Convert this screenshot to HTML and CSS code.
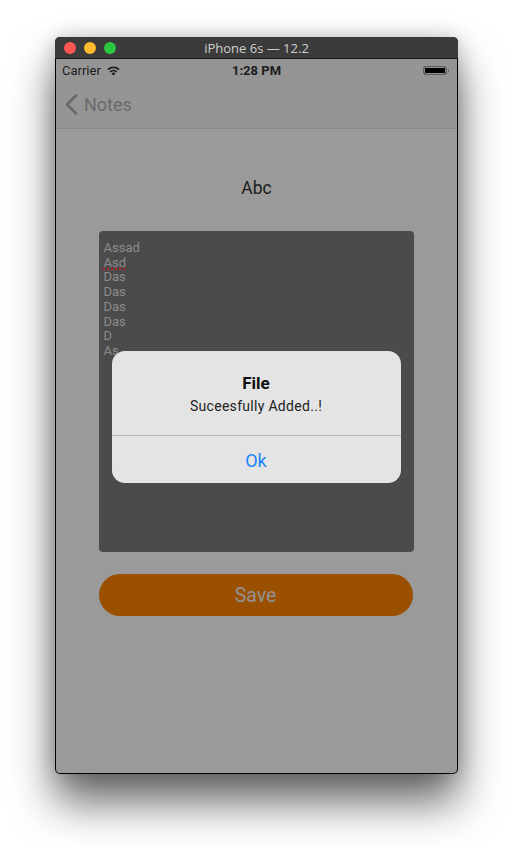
FILE: index.html
```html
<!DOCTYPE html>
<html>
<head>
<meta charset="utf-8">
<link rel="stylesheet" href="styles.css">
</head>
<body>
<div class="page">
  <div class="window">
    <div class="titlebar">
      <div class="lights">
        <span class="light red"></span>
        <span class="light yellow"></span>
        <span class="light green"></span>
      </div>
      <div class="title">iPhone 6s — 12.2</div>
    </div>
    <div class="screen">
      <div class="statusbar">
        <div class="carrier">Carrier
          <svg class="wifi" width="15" height="11" viewBox="0 0 15 11">
            <path d="M7.5 10.5 L5.6 8.4 A2.8 2.8 0 0 1 9.4 8.4 Z" fill="#1c1c1c"/>
            <path d="M3.6 6.3 A5.6 5.6 0 0 1 11.4 6.3 L10.2 7.5 A4 4 0 0 0 4.8 7.5 Z" fill="#1c1c1c"/>
            <path d="M1.4 4 A8.8 8.8 0 0 1 13.6 4 L12.4 5.2 A7.1 7.1 0 0 0 2.6 5.2 Z" fill="#1c1c1c"/>
          </svg>
        </div>
        <div class="time">1:28 PM</div>
        <div class="battery"><span class="cell"></span><span class="nub"></span></div>
      </div>
      <div class="navbar">
        <svg class="chev" width="13" height="21" viewBox="0 0 13 21"><path d="M11 1.5 L2 10.5 L11 19.5" fill="none" stroke="#6a6a6a" stroke-width="2.6" stroke-linecap="round" stroke-linejoin="round"/></svg>
        <span class="back">Notes</span>
      </div>
      <div class="content">
        <div class="heading">Abc</div>
        <div class="notebox">
          <div class="line">Assad</div>
          <div class="line"><span class="typo">Asd</span></div>
          <div class="line">Das</div>
          <div class="line">Das</div>
          <div class="line">Das</div>
          <div class="line">Das</div>
          <div class="line">D</div>
          <div class="line">As</div>
          <div class="alert">
            <div class="alert-body">
              <div class="alert-title">File</div>
              <div class="alert-msg">Suceesfully Added..!</div>
            </div>
            <div class="alert-btn">Ok</div>
          </div>
        </div>
        <div class="save">Save</div>
      </div>
    </div>
  </div>
</div>
</body>
</html>
```

FILE: styles.css
```css
html, body {
  margin: 0;
  padding: 0;
  background: #ffffff;
}
body {
  width: 513px;
  height: 848px;
  overflow: hidden;
  font-family: "Liberation Sans", Arial, sans-serif;
}
.page {
  padding: 37px 0 0 55px;
}
.window {
  width: 403px;
  height: 737px;
  border-radius: 5px;
  background: #000;
  box-shadow: 0 28px 44px rgba(0, 0, 0, 0.6), 0 0 20px rgba(0, 0, 0, 0.2);
  display: flex;
  flex-direction: column;
  overflow: hidden;
}
.titlebar {
  height: 22px;
  background: #3b3b3b;
  border-bottom: 1px solid #1a1a1a;
  box-sizing: border-box;
  display: flex;
  align-items: center;
  position: relative;
}
.lights {
  display: flex;
  gap: 8px;
  padding-left: 9px;
}
.light {
  width: 12px;
  height: 12px;
  border-radius: 50%;
  display: block;
}
.red { background: #fd5754; }
.yellow { background: #febb2d; }
.green { background: #2ac73f; }
.title {
  position: absolute;
  left: 0;
  right: 0;
  text-align: center;
  color: #cfcfcf;
  font-size: 13px;
  font-family: "Open Sans", "Liberation Sans", sans-serif;
  line-height: 22px;
}
.screen {
  flex: 1;
  margin: 0 1px 1px 1px;
  border-radius: 0 0 4px 4px;
  background: #9a9a9a;
  display: flex;
  flex-direction: column;
  overflow: hidden;
}
.statusbar {
  height: 22px;
  background: #959595;
  display: flex;
  align-items: center;
  justify-content: space-between;
  padding: 0 8px 0 6px;
  position: relative;
  font-family: "Roboto", "Liberation Sans", sans-serif;
  font-size: 13px;
  color: #1c1c1c;
}
.carrier {
  display: flex;
  align-items: center;
  gap: 5px;
}
.wifi { display: block; }
.time {
  position: absolute;
  left: 0;
  right: 0;
  text-align: center;
  font-weight: bold;
  pointer-events: none;
}
.battery {
  display: flex;
  align-items: center;
  gap: 1px;
}
.cell {
  width: 22px;
  height: 7px;
  background: #000;
  border: 1px solid #5d5d5d;
  border-radius: 3px;
  box-shadow: inset 0 0 0 1px #8f8f8f;
}
.nub {
  width: 1px;
  height: 3px;
  background: #6b6b6b;
}
.navbar {
  height: 48px;
  background: #959595;
  border-bottom: 1px solid #888;
  box-sizing: border-box;
  display: flex;
  align-items: center;
  padding-left: 9px;
  gap: 6px;
}
.chev { display: block; margin-top: 0; }
.back {
  color: #6a6a6a;
  font-size: 18px;
  font-family: "Roboto", "Liberation Sans", sans-serif;
}
.content {
  flex: 1;
  display: flex;
  flex-direction: column;
  align-items: center;
}
.heading {
  margin-top: 49px;
  font-size: 17.5px;
  color: #1a1a1a;
  font-family: "Roboto", "Liberation Sans", sans-serif;
  line-height: 20px;
}
.notebox {
  margin-top: 33px;
  width: 315px;
  height: 321px;
  box-sizing: border-box;
  background: #4b4b4b;
  border-radius: 4px;
  padding: 10px 5px;
  position: relative;
  margin-left: -1px;
}
.line {
  color: #8b8b8b;
  font-size: 13px;
  line-height: 14.7px;
  font-family: "Roboto", "Liberation Sans", sans-serif;
}
.typo {
  text-decoration: underline dotted #b0231f;
  text-decoration-thickness: 2px;
  text-underline-offset: 2px;
}
.alert {
  position: absolute;
  left: 13px;
  top: 120px;
  width: 289px;
  height: 132px;
  background: #e4e4e4;
  border-radius: 13px;
  display: flex;
  flex-direction: column;
  overflow: hidden;
  font-family: "Roboto", "Liberation Sans", sans-serif;
}
.alert-body {
  height: 85px;
  box-sizing: border-box;
  border-bottom: 1px solid #b9b9b9;
  display: flex;
  flex-direction: column;
  align-items: center;
  padding-top: 22px;
}
.alert-title {
  font-size: 17px;
  font-weight: bold;
  color: #111;
  line-height: 20px;
}
.alert-msg {
  font-size: 14px;
  letter-spacing: 0.3px;
  color: #222;
  margin-top: 5px;
  line-height: 16px;
}
.alert-btn {
  flex: 1;
  display: flex;
  align-items: center;
  justify-content: center;
  color: #1b84fb;
  font-size: 18px;
  padding-top: 1px;
}
.save {
  margin-top: 22px;
  width: 314px;
  height: 42px;
  border-radius: 21px;
  background: #9b4f00;
  color: #939393;
  font-size: 19.5px;
  font-family: "Roboto", "Liberation Sans", sans-serif;
  display: flex;
  align-items: center;
  justify-content: center;
  margin-left: -2px;
}
```
